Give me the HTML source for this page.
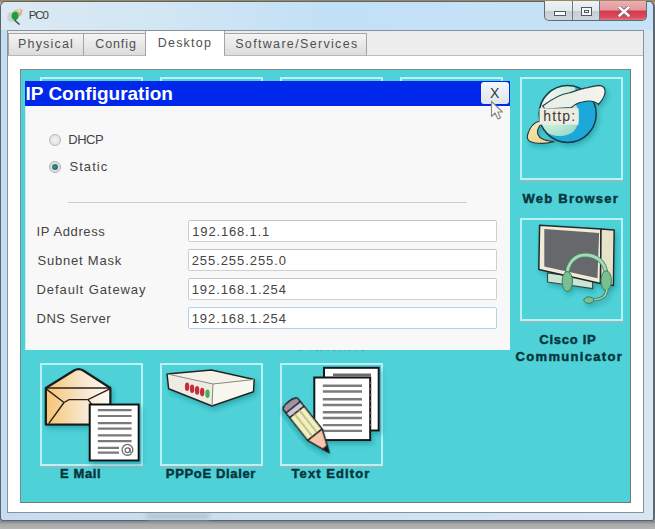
<!DOCTYPE html>
<html><head><meta charset="utf-8">
<style>
*{margin:0;padding:0;box-sizing:border-box}
html,body{width:655px;height:529px;overflow:hidden;background:#a8a8a8;font-family:"Liberation Sans",sans-serif}
.a{position:absolute}
.t{position:absolute;white-space:pre;line-height:1}
#topstrip{left:0;top:0;width:655px;height:2px;background:#9c8a5a}
#bottom{left:0;top:521px;width:655px;height:8px;background:linear-gradient(#7d8288,#a9a9a9 40%,#b4b4b4)}
#win{left:0;top:1px;width:655px;height:520px;border:1px solid #5a6470;border-right:2px solid #5e6670;border-radius:6px 6px 3px 3px;background:linear-gradient(90deg,#c6dcf0,#cfe0f0 50%,#d6e6f3)}
#titlebg{left:1px;top:2px;width:652px;height:28px;border-radius:5px 5px 0 0;background:linear-gradient(90deg,#dce9f3,#d2e6f4 25%,#c2e0f6 50%,#c6e2f7 100%)}
#smear{left:146px;top:513px;width:64px;height:6px;border-radius:3px;background:#b4c4d4;filter:blur(2px)}
#panel{left:7px;top:30px;width:637px;height:483px;background:#eeeded;border:1px solid #86929e}
#content{left:8px;top:56px;width:635px;height:456px;background:#fff}
#tabline{left:8px;top:55px;width:635px;height:1px;background:#bcbcbc}
.tab{position:absolute;top:33px;height:23px;background:linear-gradient(#f4f4f4,#e8e8e8 50%,#dcdcdc);border:1px solid #a4a4a4;border-bottom:1px solid #b8b8b8}
.tt{position:absolute;white-space:pre;line-height:1;font-size:12.5px;color:#505050}
#desk{left:20px;top:69px;width:611px;height:434px;background:#4ed2d8;border:1px solid #7d8a8c;border-right-color:#6c7a7c;border-bottom-color:#6c7a7c}
.box{position:absolute;width:103px;height:103px;border:2px solid #b6f2f6;box-shadow:0 1.5px 0 #98b8b8}
.lbl{position:absolute;white-space:pre;line-height:1;font-weight:bold;font-size:13px;color:#08343c;-webkit-text-stroke:0.45px #08343c}
#dlg{left:25px;top:81px;width:485px;height:269px;background:#f8f8f8;border-left:1px solid #c4f0f2}
#dbar{left:25px;top:81px;width:485px;height:25px;background:#0028eb}
.inp{position:absolute;left:188px;width:309px;height:22px;background:#fff;border:1px solid #cfcfcf;border-top-color:#c4c4c4;border-radius:2px}
.ftxt{position:absolute;white-space:pre;line-height:1;font-size:13px;color:#444}
</style></head><body><div id="wrap" style="position:absolute;left:0;top:0;width:655px;height:529px">
<div id="topstrip" class="a"></div>
<div id="bottom" class="a"></div>
<div id="win" class="a"></div>
<div id="titlebg" class="a"></div>
<div id="smear" class="a"></div>
<!-- title -->
<svg class="a" style="left:0;top:0" width="30" height="30" viewBox="0 0 30 30">
  <ellipse cx="12" cy="17" rx="5" ry="5" fill="#c4cad0" opacity="0.8"/>
  <path d="M13,11 L20,8.5 L22.5,10 L21.5,14.5 L17,18.5 Z" fill="#c8b088"/>
  <path d="M16,10 L21,9 L20,13 Z" fill="#e8dcc0"/>
  <ellipse cx="15" cy="16" rx="3.4" ry="4" fill="#16a03e"/>
  <path d="M14.5,20 L19.5,24.5" stroke="#3e4850" stroke-width="1.6"/>
</svg>
<div class="t" style="left:28.8px;top:10px;font-size:11.5px;letter-spacing:-1.14px;color:#383c40">PC0</div>
<!-- window controls -->
<div class="a" style="left:544px;top:1px;width:103px;height:20px;border:1px solid #5e6a76;border-top:none;border-radius:0 0 5px 5px;overflow:hidden;background:linear-gradient(#eef2f6,#e2e8ee 50%,#c6ced6 52%,#cfd6de)">
  <div class="a" style="left:27px;top:0;width:1px;height:19px;background:#6c7884"></div>
  <div class="a" style="left:54px;top:0;width:1px;height:19px;background:#6c7884"></div>
  <div class="a" style="left:55px;top:0;width:48px;height:19px;background:linear-gradient(#eab0b6,#e29aa2 45%,#d63a4c 55%,#d84c5c 85%,#e07886)"></div>
  <div class="a" style="left:9px;top:10px;width:11.5px;height:4.5px;border:1px solid #505a66;background:#fafcfe"></div>
  <div class="a" style="left:36px;top:5.5px;width:11px;height:9px;border:1px solid #505a66;background:#f4f6f8"><div class="a" style="left:2px;top:2px;width:5px;height:3px;border:1px solid #505a66"></div></div>
  <svg class="a" style="left:73px;top:5px" width="12" height="11" viewBox="0 0 12 11"><path d="M1.5,1.5 L10.5,9.5 M10.5,1.5 L1.5,9.5" stroke="#8a5a60" stroke-width="4" stroke-linecap="square"/><path d="M1.5,1.5 L10.5,9.5 M10.5,1.5 L1.5,9.5" stroke="#fff" stroke-width="2.4" stroke-linecap="square"/></svg>
</div>
<div id="panel" class="a"></div>
<div id="content" class="a"></div>
<div id="tabline" class="a"></div>
<!-- tabs -->
<div class="tab" style="left:8px;width:76px"></div>
<div class="tab" style="left:83px;width:63px"></div>
<div class="a" style="left:145px;top:31px;width:80px;height:25px;background:#fff;border-left:1px solid #a4a4a4;border-right:1px solid #a4a4a4"></div>
<div class="tab" style="left:224px;width:143px"></div>
<div class="tt" style="left:18px;top:37.6px;letter-spacing:1.18px">Physical</div>
<div class="tt" style="left:95.3px;top:37.6px;letter-spacing:0.88px">Config</div>
<div class="tt" style="left:157.7px;top:37px;letter-spacing:1.23px">Desktop</div>
<div class="tt" style="left:235.2px;top:37.6px;letter-spacing:1.33px">Software/Services</div>
<!-- desktop -->
<div id="desk" class="a"></div>
<div class="box" style="left:40px;top:77px"></div>
<div class="box" style="left:160px;top:77px"></div>
<div class="box" style="left:280px;top:77px"></div>
<div class="box" style="left:400px;top:77px"></div>
<div class="box" style="left:520px;top:77px"></div>
<div class="box" style="left:520px;top:218px"></div>
<div class="box" style="left:40px;top:363px"></div>
<div class="box" style="left:160px;top:363px"></div>
<div class="box" style="left:280px;top:363px"></div>
<div class="lbl" style="left:522.6px;top:192.1px;letter-spacing:1.24px">Web Browser</div>
<div class="lbl" style="left:539.3px;top:332.6px;letter-spacing:0.74px">Cisco IP</div>
<div class="lbl" style="left:515.5px;top:349.6px;letter-spacing:1.33px">Communicator</div>
<div class="lbl" style="left:59.9px;top:467px;letter-spacing:0.63px">E Mail</div>
<div class="lbl" style="left:165.8px;top:467px;letter-spacing:0.66px">PPPoE Dialer</div>
<div class="lbl" style="left:291.5px;top:467px;letter-spacing:1.09px">Text Editor</div>
<div class="lbl" style="left:296px;top:339px;letter-spacing:1px">Generator</div>

<!-- icons -->
<svg class="a" style="left:0;top:0" width="655" height="529" viewBox="0 0 655 529">
  <defs>
    <radialGradient id="gGlobe" cx="0.3" cy="0.25" r="0.85">
      <stop offset="0" stop-color="#eef6ee"/>
      <stop offset="0.35" stop-color="#b8e4d8"/>
      <stop offset="0.7" stop-color="#34b4d8"/>
      <stop offset="1" stop-color="#0a8cc8"/>
    </radialGradient>
    <linearGradient id="gRing" x1="0" y1="1" x2="1" y2="0">
      <stop offset="0" stop-color="#f2d88a"/>
      <stop offset="0.4" stop-color="#f0ecd0"/>
      <stop offset="1" stop-color="#f4f4ee"/>
    </linearGradient>
    <linearGradient id="gEnv" x1="0" y1="0" x2="1" y2="0">
      <stop offset="0" stop-color="#f6c474"/>
      <stop offset="0.6" stop-color="#f8e8d0"/>
      <stop offset="1" stop-color="#fdfaf4"/>
    </linearGradient>
    <radialGradient id="gPale" cx="0.35" cy="0.3" r="0.8">
      <stop offset="0" stop-color="#eef6ee"/>
      <stop offset="0.6" stop-color="#cdeedd"/>
      <stop offset="1" stop-color="#9adcc8"/>
    </radialGradient>
    <linearGradient id="gBand" x1="0" y1="0" x2="1" y2="0">
      <stop offset="0" stop-color="#e6f0e6"/>
      <stop offset="1" stop-color="#f4f4ec"/>
    </linearGradient>
    <linearGradient id="gTail" x1="0" y1="0" x2="0" y2="1">
      <stop offset="0" stop-color="#f4eab8"/>
      <stop offset="1" stop-color="#f0d890"/>
    </linearGradient>
    <filter id="sh" x="-20%" y="-20%" width="150%" height="150%">
      <feGaussianBlur in="SourceAlpha" stdDeviation="2.5"/>
      <feOffset dx="2" dy="3" result="b"/>
      <feFlood flood-color="#1a8890" flood-opacity="0.55"/>
      <feComposite in2="b" operator="in"/>
      <feMerge><feMergeNode/><feMergeNode in="SourceGraphic"/></feMerge>
    </filter>
  </defs>
  <!-- Web browser globe -->
  <clipPath id="cpGlobe"><circle cx="567.7" cy="114" r="28.5"/></clipPath>
  <g filter="url(#sh)">
    <circle cx="567.7" cy="114" r="28.5" fill="#1ea8d8"/>
    <g clip-path="url(#cpGlobe)">
      <path d="M544,131 C552,137 565,138 573,132 C580,125 581,113 576,105 L575,80 L530,80 L530,130 Z" fill="url(#gPale)"/>
    </g>
    <circle cx="567.7" cy="114" r="28.5" fill="none" stroke="#1c3848" stroke-width="1.5"/>
    <path d="M542.6,106 C552,99 560,94 568.7,93 C576,91 582,88 588,87.6 C594,86 600,84 603.5,87 C607,91 604,98 598.5,104.5 C595,101 590,100 582.4,102 C577,103 574,105 571.5,107.5 L545,109 Z" fill="url(#gBand)" stroke="#2a3a48" stroke-width="1.2" stroke-linejoin="round"/>
    <path d="M540,121 C535,122 530,126 527.5,135 C526,141 531,143.5 542.6,143.4 C547,143.5 551,142.5 554,141.6 C549,141 545,140.5 542.6,139 C538,137 536,132 538.5,128 C539.5,126 540,125 541,124.5 Z" fill="url(#gTail)" stroke="#2a3a48" stroke-width="1.2" stroke-linejoin="round"/>
  </g>
  <rect x="539.5" y="108.4" width="39" height="16.3" fill="#ecece0"/>
  <text x="543.3" y="120.5" font-family="Liberation Sans" font-size="14" letter-spacing="1.16" fill="#3a3a3a">http:</text>

  <!-- Cisco IP Communicator -->
  <g filter="url(#sh)">
    <path d="M547.5,272.8 L592.7,279 L592.7,288.7 L547.5,282 Z" fill="#cce6d6" stroke="#2e4a44" stroke-width="1.2" stroke-linejoin="round"/>
    <path d="M539.6,225.2 L601,229 L600.5,283.5 L538.8,269.6 Z" fill="#f2ecd6" stroke="#1e2a30" stroke-width="1.5" stroke-linejoin="round"/>
    <path d="M601,229 L614.2,229.9 L613.4,285.5 L600.5,283.5 Z" fill="#e8e2c8" stroke="#1e2a30" stroke-width="1.5" stroke-linejoin="round"/>
    <path d="M544.3,229.1 L599.1,233.1 L597.5,278.3 L544.3,266.4 Z" fill="#66686c"/>
    <path d="M567,276 C567,263 575,255 585,255 C596,255 606,262 606,275" fill="none" stroke="#4a8a66" stroke-width="4.6"/>
    <path d="M567,276 C567,263 575,255 585,255 C596,255 606,262 606,275" fill="none" stroke="#a6dab6" stroke-width="2.8"/>
    <ellipse cx="567.3" cy="281.5" rx="5.2" ry="10" fill="#78c090" stroke="#3e7a58" stroke-width="1"/>
    <ellipse cx="606.2" cy="280.7" rx="5.2" ry="10" fill="#78c090" stroke="#3e7a58" stroke-width="1"/>
    <path d="M607,290 C606,297 600,299.8 593,299.8" fill="none" stroke="#3e7a58" stroke-width="3"/>
    <path d="M607,290 C606,297 600,299.8 593,299.8" fill="none" stroke="#9cd4ae" stroke-width="1.6"/>
    <ellipse cx="588.8" cy="300.1" rx="5" ry="3.2" fill="#78c090" stroke="#3e7a58" stroke-width="1"/>
  </g>

  <!-- Email -->
  <g filter="url(#sh)">
    <path d="M45.8,388 L74,370.5 Q78.6,367.8 83.2,370.5 L110.4,388 L110.4,424.7 L45.8,424.7 Z" fill="url(#gEnv)" stroke="#1c1c1c" stroke-width="2.3" stroke-linejoin="round"/>
    <path d="M47,388 H109 M45.8,388.6 L64,402.5 L69,399.6 L88,399.6 L110.4,388.6 M48.7,423.7 L64,402.5 M107,423.7 L88,399.6" fill="none" stroke="#2a2018" stroke-width="1.4"/>
    <rect x="89.7" y="404.5" width="49" height="56" fill="#fff" stroke="#111" stroke-width="2"/>
  </g>
  <g stroke="#7a7a7a" stroke-width="2.2">
    <path d="M97.8,410.2 H131.6 M97.8,416 H131.6 M97.8,423.2 H131.6 M97.8,428.6 H131.6 M97.8,435.3 H131.6 M97.8,441.1 H131.6 M97.8,447.8 H119 M97.8,452.7 H119"/>
  </g>
  <g fill="none" stroke="#6e6e6e" stroke-width="1.3"><path d="M131.5,453.5 A5.4,5.4 0 1 1 132.8,448.8 L132.6,451.5 Q132,453 130.3,452"/><circle cx="127.5" cy="450.2" r="2.4"/><path d="M130,447.8 L130,452"/></g>

  <!-- PPPoE -->
  <g filter="url(#sh)">
    <path d="M167,373.9 L211.4,370 L254.2,379.4 L213,384 Z" fill="#f4f2e8"/>
    <path d="M167,373.9 L213,384 L212,406 L168.6,388.7 Z" fill="#eeece2"/>
    <path d="M213,384 L254.2,379.4 L253.5,391.8 L212,406 Z" fill="#f8f7f0"/>
    <path d="M167,373.9 L211.4,370 L254.2,379.4 L253.5,391.8 L212,406 L168.6,388.7 Z" fill="none" stroke="#222" stroke-width="1.5" stroke-linejoin="round"/>
  </g>
  <path d="M167.5,374 L213,384 L254,379.5 M213,384 L212,405.5" fill="none" stroke="#8c8a80" stroke-width="1"/>
  <g>
    <ellipse cx="187.1" cy="386.7" rx="2.2" ry="4.3" fill="#c82c3c"/>
    <ellipse cx="192.1" cy="388.8" rx="2.2" ry="4.3" fill="#c82c3c"/>
    <ellipse cx="197.1" cy="390.4" rx="2.2" ry="4.3" fill="#c82c3c"/>
    <ellipse cx="202.2" cy="392.1" rx="2.2" ry="4.3" fill="#c82c3c"/>
    <ellipse cx="207.5" cy="393.8" rx="2.2" ry="4.3" fill="#44b050"/>
  </g>

  <!-- Text editor -->
  <g filter="url(#sh)">
    <rect x="324" y="367.8" width="54.7" height="62.7" fill="#fff" stroke="#151515" stroke-width="2"/>
    <rect x="314.3" y="377.5" width="55.9" height="62.6" fill="#fff" stroke="#151515" stroke-width="2"/>
  </g>
  <path d="M333,375 H371" stroke="#6c6c6c" stroke-width="3"/><path d="M370.5,382 v2 M370.5,388 v2 M370.5,394 v2 M370.5,400 v2 M370.5,406 v2 M370.5,412 v2 M370.5,418 v2 M370.5,424 v2" stroke="#555" stroke-width="1.2"/>
  <g stroke="#7c7c7c" stroke-width="2.4">
    <path d="M322.8,385.8 H362 M322.8,391.5 H362 M322.8,399.3 H362 M322.8,405 H362 M322.8,412.2 H362 M322.8,418 H362 M322.8,425.1 H362 M322.8,430.9 H362"/>
  </g>
  <g filter="url(#sh)" transform="translate(288.8,401.8) rotate(51.6)" stroke="#1e2222" stroke-width="1.6" stroke-linejoin="round">
    <path d="M9,-9.3 L3.5,-9.3 C-1.5,-9.3 -1.5,9.3 3.5,9.3 L9,9.3 Z" fill="#9c94a6"/>
    <rect x="7" y="-9.3" width="6" height="18.6" fill="#cec8d6"/>
    <rect x="13" y="-9.3" width="29" height="18.6" fill="#f2f0c0"/>
    <path d="M13,-3 H42 M13,3 H42" stroke="#b8b478" stroke-width="1.3"/>
    <path d="M42,-9.3 L58.5,-2.8 L58.5,2.8 L42,9.3 Z" fill="#f8c6a8"/>
    <path d="M58.5,-2.8 L65,0 L58.5,2.8 Z" fill="#111"/>
  </g>
</svg>

<!-- dialog -->
<div id="dlg" class="a"></div>
<div id="dbar" class="a"></div>
<div class="t" style="left:25.5px;top:83.7px;font-size:19px;font-weight:bold;color:#fff">IP Configuration</div>
<div class="a" style="left:481px;top:82px;width:28px;height:22px;border-radius:3px;background:linear-gradient(#f4f7fa,#dfe6ec)"></div>
<div class="t" style="left:490px;top:86px;font-size:14px;color:#2a3a40">X</div>
<!-- radios -->
<div class="a" style="left:49px;top:134px;width:12px;height:12px;border-radius:50%;border:1px solid #b8b8b8;background:radial-gradient(#f4f4f4,#dcdcdc)"></div>
<div class="a" style="left:49px;top:161px;width:12px;height:12px;border-radius:50%;border:1px solid #b0b0b0;background:radial-gradient(#f0f0f0,#d8d8d8)"><div class="a" style="left:2px;top:2px;width:6px;height:6px;border-radius:50%;background:radial-gradient(circle at 40% 40%,#3a8c90,#1e5c60)"></div></div>
<div class="ftxt" style="left:68.3px;top:133.1px;letter-spacing:-0.49px">DHCP</div>
<div class="ftxt" style="left:69.5px;top:159.5px;letter-spacing:1.04px">Static</div>
<div class="a" style="left:68px;top:202px;width:399px;height:1px;background:#cdcdcd"></div>
<div class="ftxt" style="left:36.6px;top:224.8px;letter-spacing:0.62px">IP Address</div>
<div class="ftxt" style="left:37.5px;top:253.9px;letter-spacing:0.78px">Subnet Mask</div>
<div class="ftxt" style="left:36.5px;top:283px;letter-spacing:0.92px">Default Gateway</div>
<div class="ftxt" style="left:36.5px;top:311.8px;letter-spacing:0.53px">DNS Server</div>
<div class="inp" style="top:220px"></div>
<div class="inp" style="top:249px"></div>
<div class="inp" style="top:278px"></div>
<div class="inp" style="top:307px;border-color:#b8cfe6"></div>
<div class="ftxt" style="left:192.3px;top:224.8px;letter-spacing:0.83px">192.168.1.1</div>
<div class="ftxt" style="left:191.7px;top:254.2px;letter-spacing:0.93px">255.255.255.0</div>
<div class="ftxt" style="left:191.7px;top:283px;letter-spacing:0.93px">192.168.1.254</div>
<div class="ftxt" style="left:191.7px;top:312.1px;letter-spacing:0.93px">192.168.1.254</div>
<svg class="a" style="left:490px;top:100px" width="16" height="21" viewBox="0 0 16 21"><path d="M1.5,1.5 L1.5,16.5 L5,13 L8,19 L10.5,18 L7.8,12 L12.5,12 Z" fill="#fbfbfd" stroke="#8a8a8a" stroke-width="1.2" stroke-linejoin="round"/></svg>
</div></body></html>
